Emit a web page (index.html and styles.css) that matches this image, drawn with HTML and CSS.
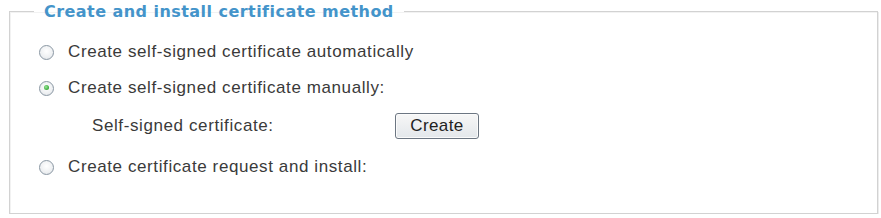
FILE: index.html
```html
<!DOCTYPE html>
<html>
<head>
<meta charset="utf-8">
<link rel="stylesheet" href="styles.css">
</head>
<body>
<fieldset class="box">
  <legend class="title">Create and install certificate method</legend>
  <div class="row r1">
    <span class="radio"></span>
    <span class="label">Create self-signed certificate automatically</span>
  </div>
  <div class="row r2">
    <span class="radio checked"></span>
    <span class="label">Create self-signed certificate manually:</span>
  </div>
  <div class="row r3">
    <span class="sublabel">Self-signed certificate:</span>
    <span class="btn">Create</span>
  </div>
  <div class="row r4">
    <span class="radio"></span>
    <span class="label">Create certificate request and install:</span>
  </div>
</fieldset>
</body>
</html>
```
FILE: styles.css
```css
html, body {
  margin: 0;
  padding: 0;
  background: #ffffff;
}
body {
  padding: 2px 3px 0 9px;
  font-family: "Liberation Sans", Arial, sans-serif;
  color: #3a3a3a;
}
.box {
  margin: 0;
  width: 869px;
  box-sizing: border-box;
  height: 212px;
  border: 1px solid #d2d2d2;
  box-shadow: inset 1px 1px 0 #f2f2f2, 1px 1px 0 #ececec;
  padding: 0 0 0 29px;
}
.title {
  margin-left: -5px;
  padding: 0 10px 0 10px;
  font-family: "DejaVu Sans", Verdana, sans-serif;
  font-weight: bold;
  font-size: 16px;
  line-height: 19px;
  color: #4494ca;
  letter-spacing: 0.45px;
}
.row {
  display: flex;
  align-items: center;
  height: 20px;
  font-size: 17px;
  letter-spacing: 0.6px;
}
.r1 { margin-top: 21px; }
.r2 { margin-top: 16px; }
.r3 { margin-top: 15px; height: 26px; }
.r4 { margin-top: 18px; }
.radio {
  width: 15px;
  height: 15px;
  box-sizing: border-box;
  border-radius: 50%;
  border: 1.5px solid #8a97a3;
  background: radial-gradient(circle at 50% 40%, #ffffff 0%, #eef0f2 60%, #d6dbe0 100%);
  margin-right: 14px;
  flex: none;
  position: relative;
}
.radio.checked::after {
  content: "";
  position: absolute;
  left: 3.5px;
  top: 3.5px;
  width: 5px;
  height: 5px;
  border-radius: 50%;
  background: radial-gradient(circle at 40% 40%, #9be69b 0%, #3fae3f 65%, #2a8a2a 100%);
}
.sublabel {
  margin-left: 53px;
  width: 303px;
  flex: none;
}
.btn {
  box-sizing: border-box;
  width: 84px;
  height: 26px;
  border: 1px solid #6c7682;
  border-radius: 3px;
  background: linear-gradient(#f7f7f7, #e3e7eb);
  box-shadow: inset 0 0 0 1px #fbfbfb;
  display: flex;
  align-items: center;
  justify-content: center;
  font-size: 17px;
  color: #222;
  letter-spacing: 0.4px;
}
```
